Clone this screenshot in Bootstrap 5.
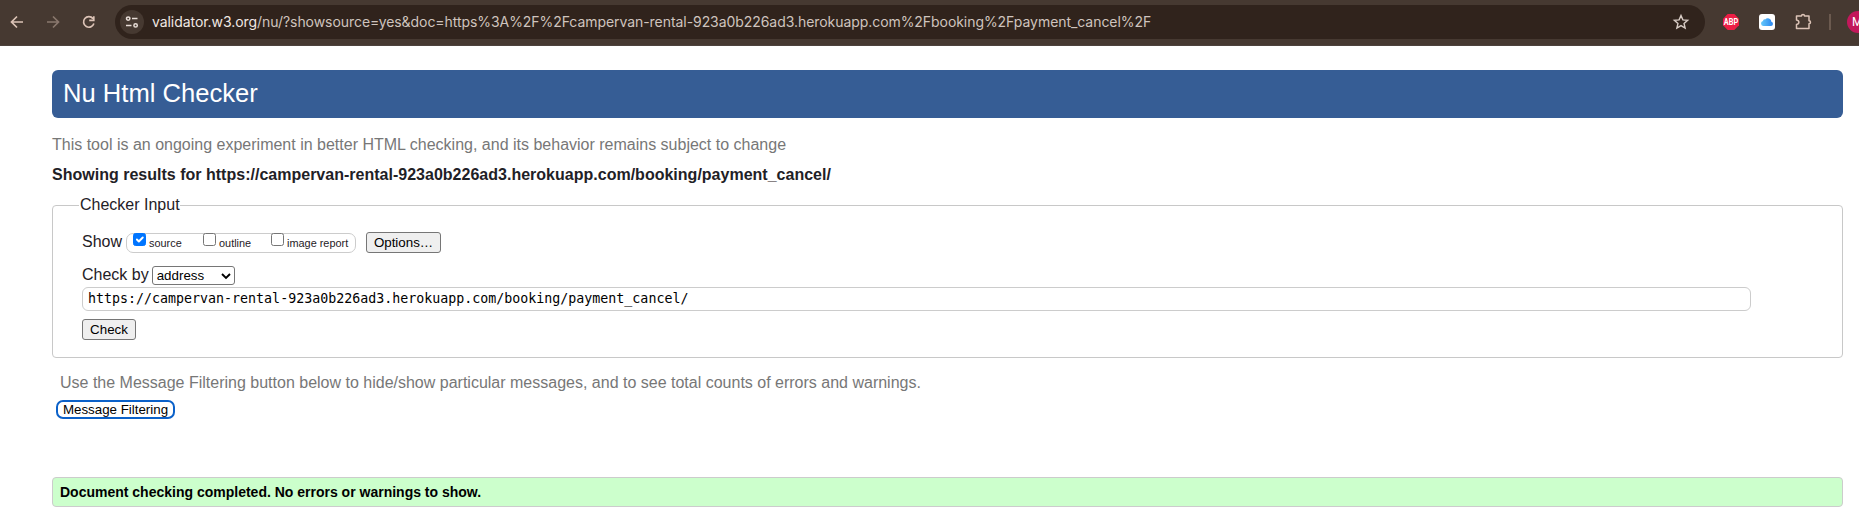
<!DOCTYPE html>
<html lang="en">
<head>
<meta charset="utf-8">
<title>Nu Html Checker</title>
<link href="https://cdn.jsdelivr.net/npm/bootstrap@5.3.0/dist/css/bootstrap.min.css" rel="stylesheet">
<style>
body{font-family:"Liberation Sans",Arial,sans-serif;font-size:16px;line-height:20px;color:#1f2126;background:#fff;overflow:hidden}
.toolbar{height:46px;background:#463931;border-bottom:1px solid #4d433d;padding:5px 0 6px 7px}
.tool-icon{width:20px;height:20px;flex:none;fill:none;stroke:#dcc3b6;stroke-width:1.7}
.omnibox{width:1590px;height:34px;margin-left:16px;border-radius:17px;background:#30231c;padding:0 14px 0 5px;flex:none}
.site-info{width:24px;height:24px;background:#463931}
.url{font-family:Inter,Roboto,sans-serif;font-size:14px;letter-spacing:-.06px;color:#cfc4be;margin-left:8px;white-space:nowrap}
.url b{font-weight:400;color:#f1e8e3}
.avatar{width:22px;height:22px;background:#c2185b;color:#fff;font:12px/22px Roboto,sans-serif;padding-left:5px;margin-left:16px;flex:none}
.divider{width:2px;height:16px;background:#6b5a4f;margin-left:16px;flex:none}
.page{margin:24px 16px 0 52px}
.banner{height:48px;background:#365d95;color:#fff;font-size:25.6px;line-height:46px;padding-left:11px;border-radius:6px;margin:0}
.note{color:#777}
.results{font-size:16px;line-height:20px;margin:10px 0 0;letter-spacing:.01px}
.checker{border:1px solid #c8c8c8;border-radius:4px;height:153px;margin-top:20px;padding:26px 0 0 29px}
.legend-text{height:20px;margin:-37px 0 0 -3px;background:#fff;width:101px;padding:0 1px;position:relative;white-space:nowrap}
.opts{width:230px;height:20px;border:1px solid #ccc;border-radius:7px;font-size:10.9px;margin-left:4px;padding-left:6px}
.opts .form-check-input{width:13px;height:13px;margin:0;border:1px solid #767676;border-radius:2.5px;flex:none;position:relative;top:-3px}
.opts .form-check-input:checked{background-color:#0075ff;border-color:#0075ff;background-size:13px}
.opts label{line-height:20px;white-space:nowrap;flex:none}
.plain{border:1px solid #767676;border-radius:3px;background:#efefef;color:#000;font-size:13.33px;line-height:18px;padding:0;text-align:center}
.addr{width:1669px;height:24px;border:1px solid #ccc;border-radius:6px;padding:0 5px;font:13.3px/22px "DejaVu Sans Mono",monospace;color:#000}
.filtering{width:119px;height:19px;border:2px solid #0b61c9;border-radius:7px;background:#fff;color:#000;font-size:13.33px;line-height:15px;padding:0;margin:7px 0 0 4px}
.success{height:30px;border:1px solid #ccc;border-radius:4px;background:#cfc;color:#000;font-size:14px;font-weight:700;line-height:29px;padding-left:7px;margin-top:58px}
</style>
</head>
<body>
<header class="toolbar d-flex align-items-center">
  <svg class="tool-icon" viewBox="0 0 20 20"><path d="M16 10H5M10 4.500L4.500 10l5.500 5.500"/></svg>
  <svg class="tool-icon" style="margin-left:16px" viewBox="0 0 20 20" opacity=".45"><path d="M4 10h11M10 4.500L15.500 10 10 15.500"/></svg>
  <svg class="tool-icon" style="margin-left:16px" viewBox="0 0 20 20"><path d="M14 6.600A5.300 5.300 0 1 0 14.900 11.600M14.800 4.200v4.200h-4.600"/></svg>
  <div class="omnibox d-flex align-items-center">
    <span class="site-info rounded-circle d-flex align-items-center justify-content-center">
      <svg width="14" height="14" viewBox="0 0 14 14" fill="none" stroke="#e8ddd7" stroke-width="1.500"><circle cx="3.200" cy="3.600" r="1.700"/><path d="M7 3.600h5.500M1 10.400h5.500"/><circle cx="10.600" cy="10.400" r="1.700"/></svg>
    </span>
    <span class="url"><b>validator.w3.org</b>/nu/?showsource=yes&amp;doc=https%3A%2F%2Fcampervan-rental-923a0b226ad3.herokuapp.com%2Fbooking%2Fpayment_cancel%2F</span>
    <svg class="ms-auto" width="20" height="20" viewBox="0 0 20 20" fill="none" stroke="#d8ccc5" stroke-width="1.400"><path d="M10 3.600l1.900 4.300 4.700.4-3.550 3.100 1.050 4.600L10 13.600 5.900 16l1.050-4.600L3.400 8.300l4.700-.4z"/></svg>
  </div>
  <svg class="flex-shrink-0" style="margin-left:18px" width="16" height="16" viewBox="0 0 16 16"><path d="M4.700 0h6.600L16 4.700v6.600L11.300 16H4.700L0 11.300V4.700z" fill="#ed1e45"/><text x="8" y="11" text-anchor="middle" textLength="14.400" lengthAdjust="spacingAndGlyphs" font-family="Roboto" font-size="8.500" font-weight="700" fill="#fff">ABP</text></svg>
  <svg class="flex-shrink-0" style="margin-left:20px" width="16" height="16" viewBox="0 0 16 16"><defs><linearGradient id="sky"><stop stop-color="#65c9fa"/><stop offset="1" stop-color="#2b86f0"/></linearGradient></defs><rect width="16" height="16" rx="3" fill="#fff"/><path d="M4.500 12a2.600 2.600 0 0 1-.6-5.100 1.900 1.900 0 0 1 2.200-1.500 3.600 3.600 0 0 1 6.300 2.300A2.200 2.200 0 0 1 12 12z" fill="url(#sky)"/></svg>
  <svg class="tool-icon" style="margin-left:18px;stroke-width:1.500" viewBox="0 0 20 20" stroke-linejoin="round"><path d="M3.500 4h5a1.500 1.500 0 0 1 3 0H16v4.800a1.500 1.500 0 0 1 0 3v4.700H3.500v-4c3.200-.7 3.200-3.800 0-4.500z"/></svg>
  <span class="divider"></span>
  <span class="avatar rounded-circle">M</span>
</header>
<main class="page">
  <h1 class="banner">Nu Html Checker</h1>
  <p class="note mb-0" style="margin-top:17px">This tool is an ongoing experiment in better HTML checking, and its behavior remains subject to change</p>
  <h2 class="results fw-bold">Showing results for https://campervan-rental-923a0b226ad3.herokuapp.com/booking/payment_cancel/</h2>
  <form class="checker">
    <div class="legend-text">Checker Input</div>
    <div class="d-flex align-items-center" style="margin-top:17px;height:21px">
      <span style="margin-top:-1px">Show</span>
      <div class="opts d-flex align-items-center">
        <input class="form-check-input" type="checkbox" id="source" checked><label for="source" style="margin-left:3px;width:54px">source</label>
        <input class="form-check-input" type="checkbox" id="outline"><label for="outline" style="margin-left:3px;width:52px">outline</label>
        <input class="form-check-input" type="checkbox" id="image"><label for="image" style="margin-left:3px">image report</label>
      </div>
      <button type="button" class="plain" style="width:75px;height:21px;margin-left:10px">Options…</button>
    </div>
    <div class="d-flex align-items-center" style="margin-top:13px;height:19px">
      <span style="margin-top:-1px">Check by</span>
      <button type="button" class="plain bg-white d-flex align-items-center justify-content-between" style="width:83px;height:19px;margin-left:3px;padding:0 3px 0 4px">address
        <svg width="10" height="8" viewBox="0 0 10 8" fill="none" stroke="#000" stroke-width="1.900"><path d="M1 2l4 4 4-4"/></svg></button>
    </div>
    <div class="addr" style="margin-top:2px" role="textbox" contenteditable="true" spellcheck="false">https://campervan-rental-923a0b226ad3.herokuapp.com/booking/payment_cancel/</div>
    <button type="button" class="plain d-block" style="width:54px;height:21px;margin-top:8px">Check</button>
  </form>
  <p class="note mb-0" style="margin:15px 0 0 8px">Use the Message Filtering button below to hide/show particular messages, and to see total counts of errors and warnings.</p>
  <button type="button" class="filtering d-block">Message Filtering</button>
  <p class="success mb-0">Document checking completed. No errors or warnings to show.</p>
</main>
<script src="https://cdn.jsdelivr.net/npm/bootstrap@5.3.0/dist/js/bootstrap.bundle.min.js"></script>
</body>
</html>
